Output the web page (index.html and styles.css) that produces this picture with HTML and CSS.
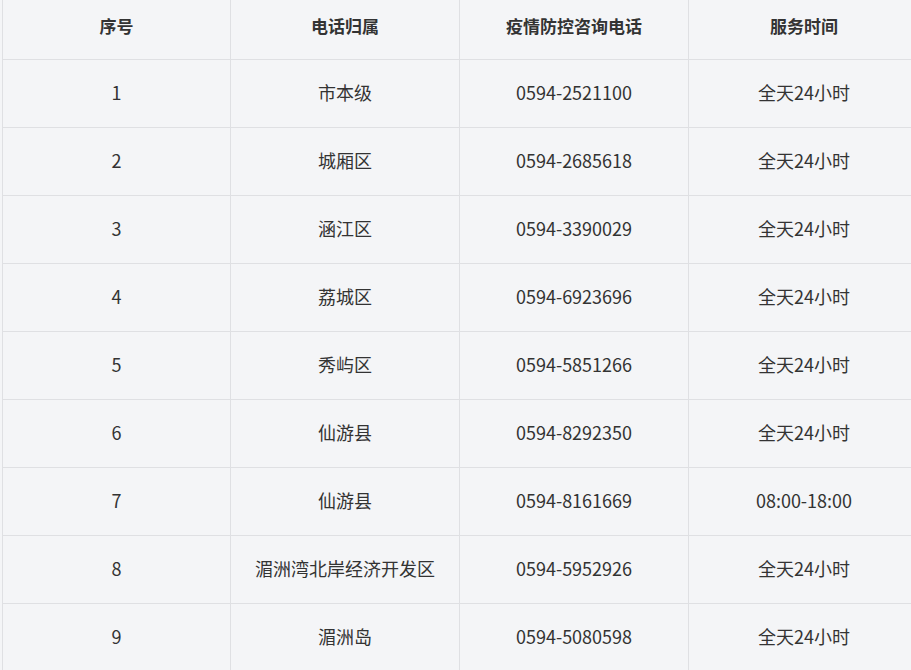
FILE: index.html
```html
<!DOCTYPE html>
<html lang="zh-CN">
<head>
<meta charset="utf-8">
<title>疫情防控咨询电话</title>
<link rel="stylesheet" href="styles.css">
</head>
<body>
<div class="wrap">
<table class="tbl">
<colgroup><col class="c1"><col class="c2"><col class="c3"><col class="c4"></colgroup>
<thead>
<tr><th>序号</th><th>电话归属</th><th>疫情防控咨询电话</th><th>服务时间</th></tr>
</thead>
<tbody>
<tr><td>1</td><td>市本级</td><td>0594-2521100</td><td>全天24小时</td></tr>
<tr><td>2</td><td>城厢区</td><td>0594-2685618</td><td>全天24小时</td></tr>
<tr><td>3</td><td>涵江区</td><td>0594-3390029</td><td>全天24小时</td></tr>
<tr><td>4</td><td>荔城区</td><td>0594-6923696</td><td>全天24小时</td></tr>
<tr><td>5</td><td>秀屿区</td><td>0594-5851266</td><td>全天24小时</td></tr>
<tr><td>6</td><td>仙游县</td><td>0594-8292350</td><td>全天24小时</td></tr>
<tr><td>7</td><td>仙游县</td><td>0594-8161669</td><td>08:00-18:00</td></tr>
<tr><td>8</td><td>湄洲湾北岸经济开发区</td><td>0594-5952926</td><td>全天24小时</td></tr>
<tr><td>9</td><td>湄洲岛</td><td>0594-5080598</td><td>全天24小时</td></tr>
</tbody>
</table>
</div>
</body>
</html>
```
FILE: styles.css
```css
html, body {
  margin: 0;
  padding: 0;
  background: #f4f5f7;
  overflow: hidden;
}
.wrap {
  padding-left: 2px;
  width: 940px;
  margin-top: -8px;
}
.tbl {
  border-collapse: collapse;
  table-layout: fixed;
  width: 917px;
  font-family: "Noto Sans CJK SC", "Noto Sans", sans-serif;
  font-size: 18px;
  color: #333;
  background: #f4f5f7;
}
.c1 { width: 228px; }
.c2 { width: 229px; }
.c3 { width: 229px; }
.c4 { width: 231px; }
.tbl th, .tbl td {
  border: 1px solid #dfe0e3;
  text-align: center;
  vertical-align: middle;
  padding: 0;
  box-sizing: border-box;
}
.tbl th {
  height: 67px;
  font-weight: bold;
  font-size: 17px;
  padding-bottom: 2px;
}
.tbl td {
  height: 68px;
  padding-bottom: 4px;
}
```
